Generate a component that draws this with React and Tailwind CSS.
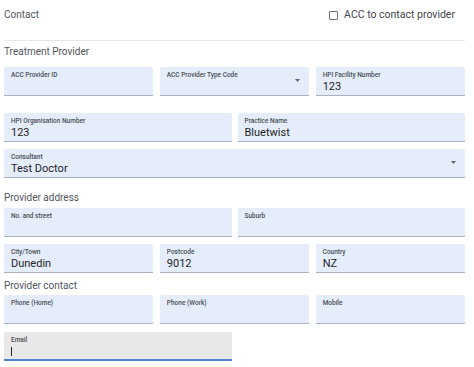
const FONT = "font-['Roboto','Liberation_Sans',sans-serif]";

function Field({ label, value, select, className = '', focused }) {
  return (
    <div
      className={`relative h-[29px] rounded-t-[2px] px-[7px] ${
        focused
          ? 'border-b-2 border-[#4f83cf] bg-[#e8e8e8]'
          : 'border-b border-[#aab2bd] bg-[#e4edf9]'
      } ${className}`}
    >
      <div className="pt-[4px] text-[6.5px] font-medium leading-[9px] text-[#4a4f57]">{label}</div>
      {value && <div className="mt-[1px] text-[11px] leading-[12px] text-[#1f2328]">{value}</div>}
      {focused && <div className="mt-[2px] h-[9px] w-px bg-[#222]" />}
      {select && (
        <svg className="absolute right-[9px] top-[12px]" width="5" height="3" viewBox="0 0 5 3">
          <path d="M0 0h5L2.5 3z" fill="#666" />
        </svg>
      )}
    </div>
  );
}

function Heading({ children, className = '' }) {
  return <div className={`text-[10px] leading-[12px] text-[#50555c] ${className}`}>{children}</div>;
}

export default function App() {
  return (
    <div className={`h-[367px] w-[474px] bg-white px-[4px] ${FONT}`}>
      <div className="w-[461px]">
        <div className="flex h-[30px] items-center justify-between pr-[10px]">
          <Heading className="text-[10.5px]">Contact</Heading>
          <label className="flex items-center gap-[6px] text-[10.5px] text-[#3f444b]">
            <span className="h-[9px] w-[9px] rounded-[1px] border border-[#6b6f75] bg-white" />
            ACC to contact provider
          </label>
        </div>
        <div className="mt-[10px] border-t border-[#e4e6e9]" />
        <Heading className="mt-[5px]">Treatment Provider</Heading>

        <div className="mt-[9px] grid grid-cols-3 gap-x-[6.5px]">
          <Field label="ACC Provider ID" />
          <Field label="ACC Provider Type Code" select />
          <Field label="HPI Facility Number" value="123" />
        </div>
        <div className="mt-[17px] grid grid-cols-2 gap-x-[6px]">
          <Field label="HPI Organisation Number" value="123" />
          <Field label="Practice Name" value="Bluetwist" />
        </div>
        <div className="mt-[7px]">
          <Field label="Consultant" value="Test Doctor" select />
        </div>

        <Heading className="mt-[14px]">Provider address</Heading>
        <div className="mt-[4px] grid grid-cols-2 gap-x-[6px]">
          <Field label="No. and street" />
          <Field label="Suburb" />
        </div>
        <div className="mt-[7px] grid grid-cols-3 gap-x-[6.5px]">
          <Field label="City/Town" value="Dunedin" />
          <Field label="Postcode" value="9012" />
          <Field label="Country" value="NZ" />
        </div>

        <Heading className="mt-[7px]">Provider contact</Heading>
        <div className="mt-[3px] grid grid-cols-3 gap-x-[6.5px]">
          <Field label="Phone (Home)" />
          <Field label="Phone (Work)" />
          <Field label="Mobile" />
        </div>
        <div className="mt-[8px] grid grid-cols-2 gap-x-[6px]">
          <Field label="Email" focused />
        </div>
      </div>
    </div>
  );
}
